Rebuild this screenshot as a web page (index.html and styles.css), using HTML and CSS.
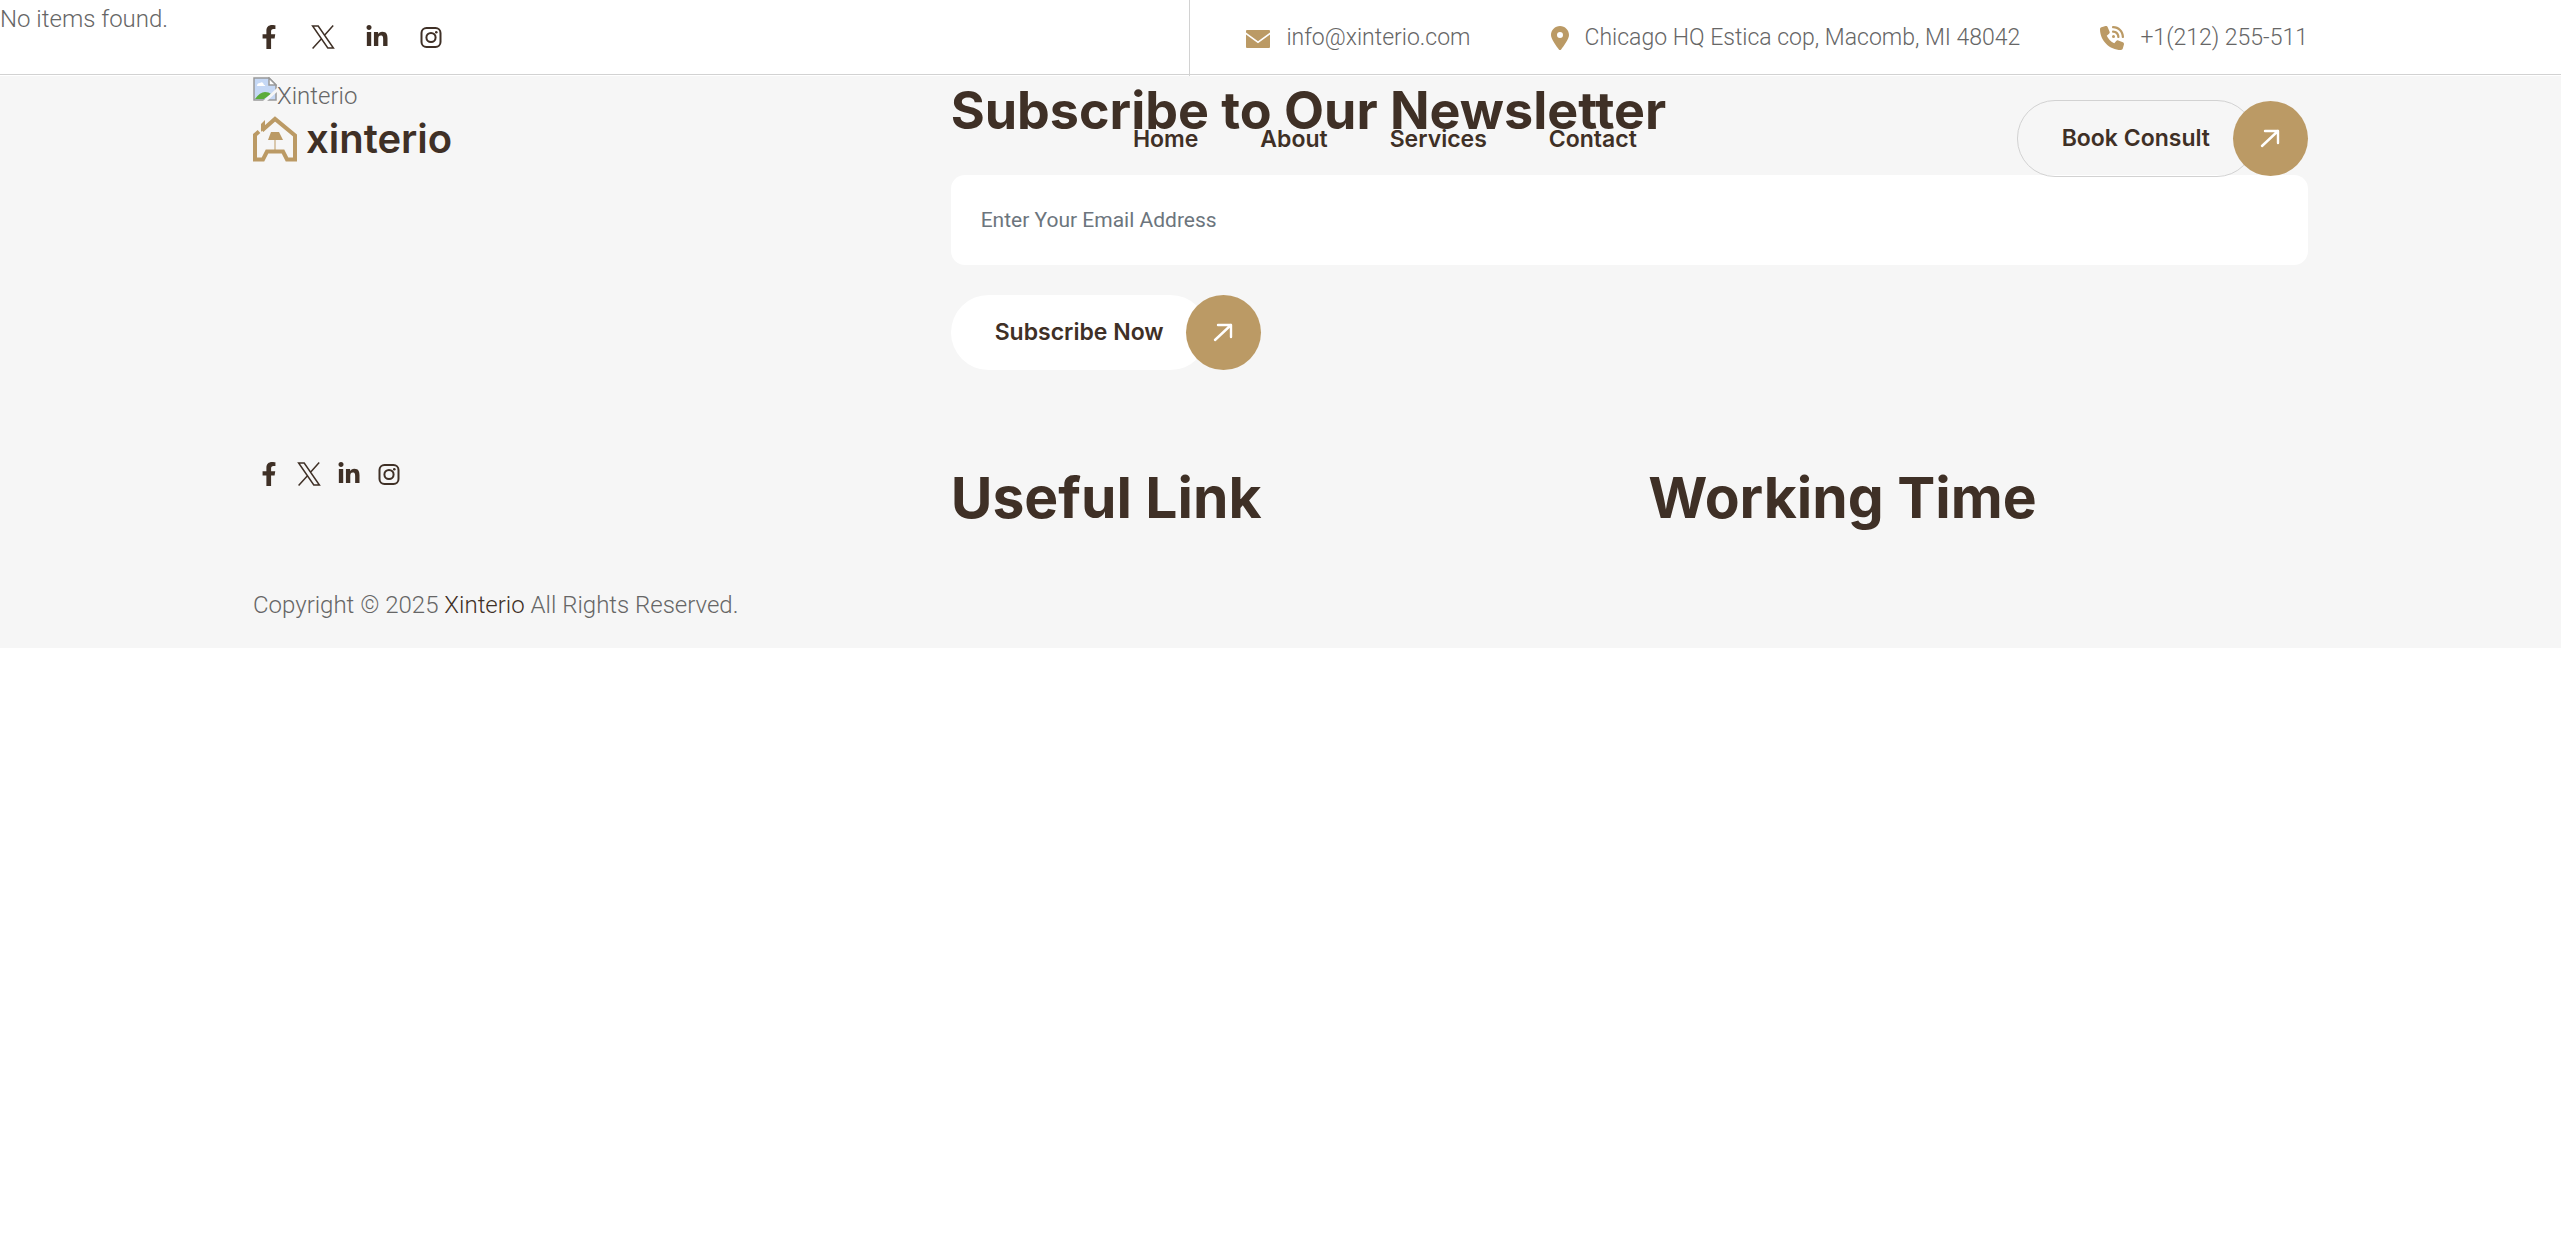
FILE: index.html
```html
<!DOCTYPE html>
<html lang="en">
<head>
<meta charset="utf-8">
<title>Xinterio</title>
<link rel="stylesheet" href="styles.css">
</head>
<body>
<svg class="sprite" aria-hidden="true">
  <symbol id="facebook" viewBox="0 0 320 512"><path d="M279.14 288l14.22-92.66h-88.91v-60.13c0-25.35 12.42-50.06 52.24-50.06h40.42V6.26S260.43 0 225.36 0c-73.22 0-121.08 44.38-121.08 124.72v70.62H22.89V288h81.39v224h100.17V288z"/></symbol>
  <symbol id="x" viewBox="0 0 24 24"><path fill="none" stroke="currentColor" stroke-width="1.5" d="M1.600 1h5.600l15.200 22h-5.600zM22.200.5 13.300 10.600M10.700 13.600 1.600 23.500"/></symbol>
  <symbol id="linkedin" viewBox="0 0 448 512"><path d="M100.28 448H7.400V148.900h92.880zM53.790 108.100C24.090 108.100 0 83.500 0 53.800a53.790 53.790 0 0 1 107.580 0c0 29.700-24.100 54.300-53.790 54.300zM447.900 448h-92.680V302.400c0-34.700-.7-79.200-48.290-79.200-48.290 0-55.690 37.700-55.690 76.700V448h-92.780V148.900h89.080v40.800h1.300c12.400-23.500 42.690-48.300 87.880-48.300 94 0 111.280 61.900 111.280 142.300V448z"/></symbol>
  <symbol id="instagram" viewBox="0 0 24 24"><g fill="none" stroke="currentColor" stroke-width="2"><rect x="2.500" y="3" width="19" height="19" rx="5"/><circle cx="12" cy="12.500" r="4.600"/></g><circle cx="17.300" cy="7.200" r="1.300"/></symbol>
  <symbol id="mail" viewBox="0 0 24 24"><path d="M1 4h22q1 0 1 1v1.500L12 15.300 0 6.500V5q0-1 1-1zM0 8.500l12 8.800 12-8.800V21q0 1-1 1H1q-1 0-1-1z"/></symbol>
  <symbol id="pin" viewBox="0 0 384 512"><path d="M215.700 499.200C267 435 384 279.400 384 192C384 86 298 0 192 0S0 86 0 192c0 87.400 117 243 168.300 307.200c12.300 15.300 35.100 15.300 47.400 0zM192 128a64 64 0 1 1 0 128 64 64 0 1 1 0-128z"/></symbol>
  <symbol id="phone" viewBox="0 0 512 512"><path d="M280 0C408.100 0 512 103.900 512 232c0 13.300-10.700 24-24 24s-24-10.700-24-24c0-101.600-82.400-184-184-184c-13.300 0-24-10.700-24-24s10.700-24 24-24zm8 192a32 32 0 1 1 0 64 32 32 0 1 1 0-64zm-32-72c0-13.300 10.700-24 24-24c75.100 0 136 60.900 136 136c0 13.300-10.700 24-24 24s-24-10.700-24-24c0-48.600-39.400-88-88-88c-13.300 0-24-10.700-24-24zM117.500 1.400c19.400-5.300 39.700 4.600 47.400 23.200l40 96c6.800 16.300 2.100 35.200-11.600 46.300L144 207.300c33.300 70.400 90.300 127.400 160.700 160.700L345 318.700c11.200-13.700 30-18.400 46.300-11.600l96 40c18.600 7.700 28.500 28 23.200 47.400l-24 88C481.800 499.900 466 512 448 512C200.600 512 0 311.400 0 64C0 46 12.100 30.200 29.500 25.400l88-24z"/></symbol>
  <symbol id="arrow" viewBox="0 0 20 20"><path fill="none" stroke="currentColor" stroke-width="2.400" stroke-linecap="round" stroke-linejoin="round" d="M5 2h13v12M18 2 2 17"/></symbol>
</svg>

<header class="site-header">
  <div class="topbar">
    <div class="container topbar-inner">
      <nav class="social social-wide" aria-label="Social">
        <a href="#" aria-label="Facebook"><svg><use href="#facebook"/></svg></a>
        <a href="#" aria-label="X"><svg><use href="#x"/></svg></a>
        <a href="#" aria-label="LinkedIn"><svg><use href="#linkedin"/></svg></a>
        <a href="#" aria-label="Instagram"><svg><use href="#instagram"/></svg></a>
      </nav>
      <div class="contacts">
        <a href="#"><svg><use href="#mail"/></svg>info@xinterio.com</a>
        <a href="#"><svg class="narrow"><use href="#pin"/></svg>Chicago HQ Estica cop, Macomb, MI 48042</a>
        <a href="#"><svg><use href="#phone"/></svg>+1(212) 255-511</a>
      </div>
    </div>
  </div>
  <div class="container navbar">
    <div class="brand">
      <a class="logo" href="#">
        <svg viewBox="0 0 44 46"><path fill="none" stroke="currentColor" stroke-width="4" d="M6 15.500 2 19v24.500h8l4-8h16l4 8h8V19.500L22 3 9 14.500"/><path d="M8 8l4-4v7l-4 5zM18 16h8l4 8H15zM21.500 24h1v10h-1z"/></svg>
        <span>xinterio</span>
      </a>
    </div>
    <nav class="menu" aria-label="Main">
      <a href="#">Home</a><a href="#">About</a><a href="#">Services</a><a href="#">Contact</a>
    </nav>
    <a class="pill pill-outline" href="#"><span class="pill-label">Book Consult</span><span class="pill-icon"><svg><use href="#arrow"/></svg></span></a>
  </div>
</header>

<main class="empty">No items found.</main>

<footer class="site-footer">
  <div class="container">
    <div class="columns">
      <div class="missing"><svg viewBox="0 0 24 24"><path fill="#c5d8f5" stroke="#999" stroke-width="1.500" d="M1 1h15l7 7v15H1z"/><path fill="#fff" stroke="#999" stroke-width="1.500" d="M16 1v7h7z"/><path fill="#fff" d="M4 9q0-3 3-3 3-2 4 2 2 0 1 1z"/><path fill="#5bac3b" d="M2 22q5-7 10-7 4 0 6 2l-7 5z"/><path fill="#f6f6f6" d="M24 11v4L14 24h-4z"/></svg>Xinterio</div>
      <form class="newsletter">
        <h2>Subscribe to Our Newsletter</h2>
        <input type="email" aria-label="Email address" placeholder="Enter Your Email Address">
        <button class="pill pill-solid" type="button"><span class="pill-label">Subscribe Now</span><span class="pill-icon"><svg><use href="#arrow"/></svg></span></button>
      </form>
    </div>
    <div class="columns links">
      <nav class="social social-footer" aria-label="Social links">
        <a href="#" aria-label="Facebook"><svg><use href="#facebook"/></svg></a>
        <a href="#" aria-label="X"><svg><use href="#x"/></svg></a>
        <a href="#" aria-label="LinkedIn"><svg><use href="#linkedin"/></svg></a>
        <a href="#" aria-label="Instagram"><svg><use href="#instagram"/></svg></a>
      </nav>
      <h3>Useful Link</h3>
      <h3>Working Time</h3>
    </div>
    <p class="copyright">Copyright © 2025 <a href="#">Xinterio</a> All Rights Reserved.</p>
  </div>
</footer>
</body>
</html>
```
FILE: styles.css
```css
* { box-sizing: border-box; }
body {
  margin: 0;
  position: relative;
  background: #fff;
  color: #666;
  font: 300 24px/38px Roboto, sans-serif;
}
a { color: #3f3026; text-decoration: none; }
svg { fill: currentColor; display: block; flex: none; }
.sprite { display: none; }
.container { width: 100%; max-width: 2055px; margin: 0 auto; }

.site-header { position: absolute; top: 0; left: 0; right: 0; }
.topbar { border-bottom: 1px solid #d2d2d2; }
.topbar-inner { display: flex; justify-content: space-between; height: 74px; }
.social { display: flex; gap: 16px; padding-left: 4px; }
.social-wide { gap: 30px; align-items: center; }
.social-footer { padding-top: 2px; }
.social svg { width: 24px; height: 24px; }
.contacts {
  display: flex;
  align-items: center;
  gap: 80px;
  height: 76px;
  padding-left: 56px;
  border-left: 1px solid #d2d2d2;
}
.contacts a { display: flex; align-items: center; gap: 16px; color: #666; font-size: 23px; }
.contacts svg { width: 24px; height: 24px; color: #bb9a65; }
.contacts .narrow { width: 18px; }

.navbar { display: flex; justify-content: space-between; align-items: center; height: 127px; }
.brand { width: 500px; }
.logo { display: flex; align-items: center; gap: 9px; font: 600 40px/46px Inter, sans-serif; }
.logo svg { width: 44px; height: 46px; color: #bb9a65; }
.menu { display: flex; gap: 62px; font: 600 23px/38px Inter, sans-serif; }

.pill {
  display: flex;
  align-items: center;
  width: max-content;
  padding: 0;
  border: 0;
  background: none;
  color: #3f3026;
  font: 600 23px/37px Inter, sans-serif;
}
.pill-label { padding: 19px 44px; border-radius: 38px; }
.pill-outline .pill-label { border: 1px solid #d2d2d2; }
.pill-solid .pill-label { background: #fff; }
.pill-icon {
  display: grid;
  place-items: center;
  width: 75px;
  height: 75px;
  margin-left: -22px;
  border-radius: 50%;
  background: #bb9a65;
  color: #fff;
}
.pill-icon svg { width: 20px; height: 20px; }

.empty { height: 76px; }
.site-footer { background: #f6f6f6; padding-bottom: 24px; }
.columns { display: grid; grid-template-columns: repeat(3, 1fr); gap: 38px; }
.missing { display: flex; height: 40px; padding-top: 1px; }
.missing svg { width: 24px; height: 24px; }
.newsletter { grid-column: span 2; }
h2, h3 { margin: 0; color: #3f3026; font-family: Inter, sans-serif; font-weight: 700; }
h2 { font-size: 52px; line-height: 69px; padding-bottom: 30px; }
h3 { font-size: 57px; line-height: 75px; }
.newsletter input {
  display: block;
  width: 100%;
  height: 90px;
  margin-bottom: 30px;
  padding: 0 30px;
  border: 0;
  border-radius: 14px;
  background: #fff;
  font: 400 21px/30px Roboto, sans-serif;
}
.newsletter input::placeholder { color: #6c757d; }
.links { padding-top: 90px; }
.copyright { margin: 51px 0 0; }
```
